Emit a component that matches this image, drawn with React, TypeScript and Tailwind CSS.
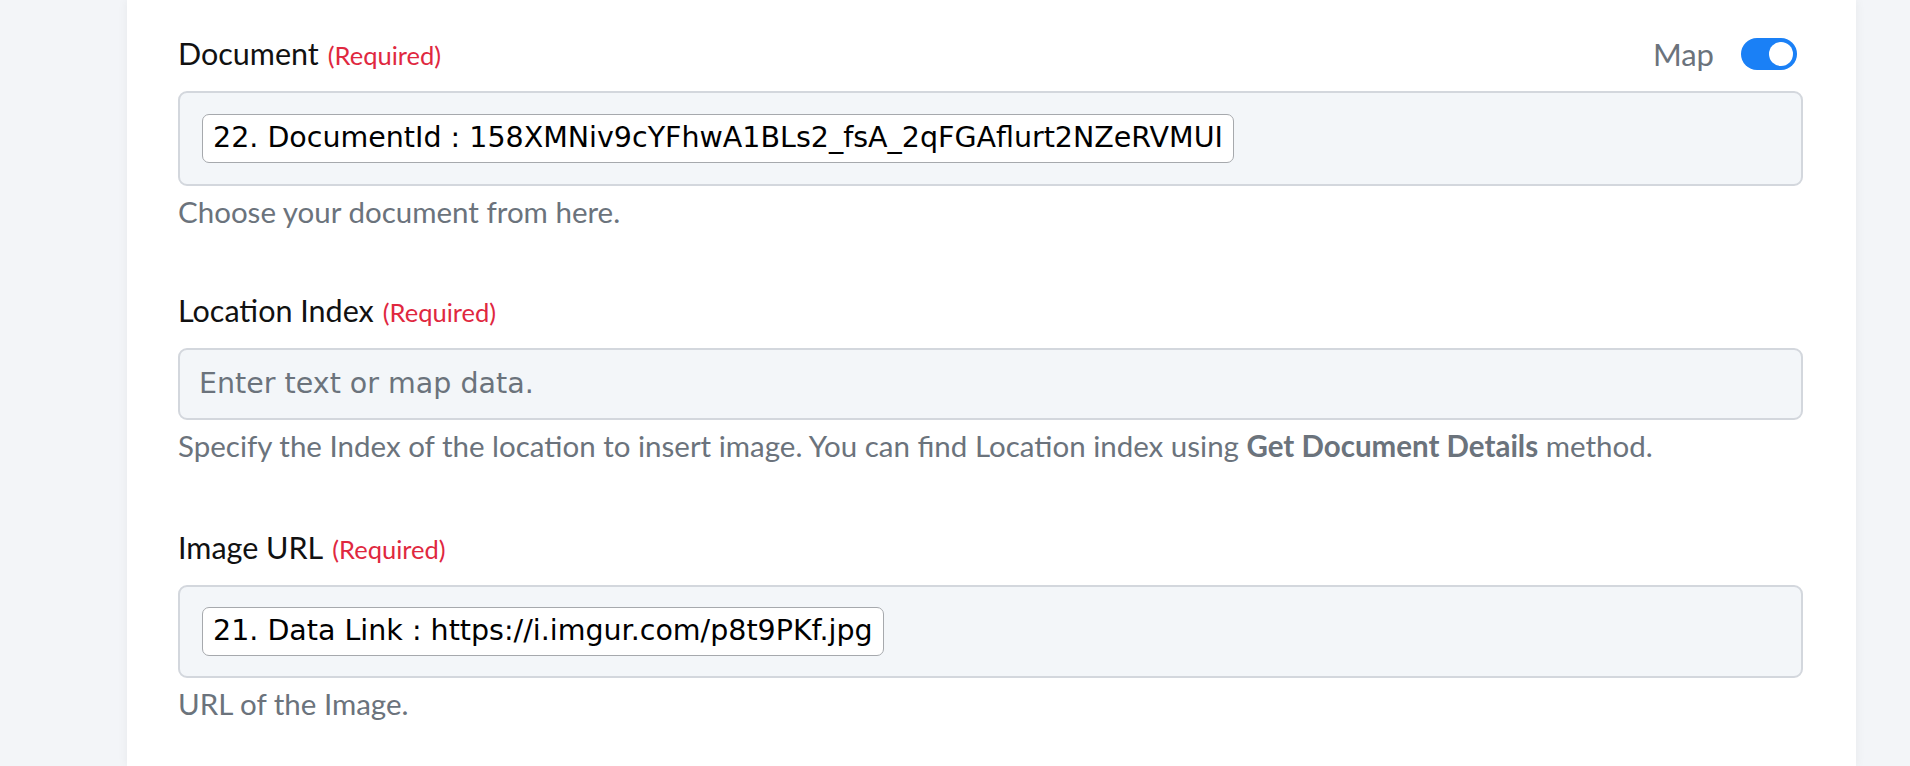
import React from 'react';

const labelFont = { fontFamily: 'Lato, "Noto Sans", sans-serif' };
const tagFont = { fontFamily: '"DejaVu Sans", Verdana, sans-serif' };

function Required() {
  return <span className="ml-[9px] text-[25.5px] text-[#e0283f]">(Required)</span>;
}

function Tag({ children }: { children: React.ReactNode }) {
  return (
    <span
      className="inline-flex h-[49px] items-center whitespace-nowrap rounded-[7px] border border-[#a6a9ad] bg-white px-[10px] text-[28.5px] text-black"
      style={tagFont}
    >
      {children}
    </span>
  );
}

function Field({
  label,
  right,
  boxClass,
  className = '',
  children,
  help,
}: {
  label: string;
  right?: React.ReactNode;
  boxClass: string;
  className?: string;
  children: React.ReactNode;
  help: React.ReactNode;
}) {
  return (
    <div className={className}>
      <div className="flex h-10 items-center justify-between">
        <div className="flex items-baseline text-[30.5px] text-[#111]">
          {label}
          <Required />
        </div>
        {right}
      </div>
      <div
        className={`mt-[17px] flex items-center rounded-[9px] border-2 border-[#d3d7dd] bg-[#f3f6f9] px-[22px] ${boxClass}`}
      >
        {children}
      </div>
      <p className="mt-[9px] whitespace-nowrap text-[29.5px] leading-[34px] text-[#6b737c]">{help}</p>
    </div>
  );
}

export default function App() {
  return (
    <div className="min-h-[766px] w-full overflow-hidden bg-[#f3f5f8]" style={labelFont}>
      <div className="ml-[127px] min-h-[766px] w-[1729px] bg-white pl-[51px] pr-[53px] pt-[34px] shadow-[0_0_10px_rgba(0,0,0,0.06)]">
        <div className="flex flex-col gap-[62px]">
          <Field
            label="Document"
            boxClass="h-[95px]"
            right={
              <div className="mr-[6px] flex items-center gap-[27px]">
                <span className="text-[31px] text-[#6b737c]">Map</span>
                <div className="flex h-[32px] w-[56px] items-center justify-end rounded-full bg-[#1a80f6] pr-[4px]">
                  <div className="h-[24px] w-[24px] rounded-full bg-white" />
                </div>
              </div>
            }
            help="Choose your document from here."
          >
            <Tag>22. DocumentId : 158XMNiv9cYFhwA1BLs2_fsA_2qFGAflurt2NZeRVMUI</Tag>
          </Field>

          <Field
            label="Location Index"
            boxClass="h-[72px] !px-[19px]"
            help={
              <>
                Specify the Index of the location to insert image. You can find Location index using{' '}
                <b className="font-bold">Get Document Details</b> method.
              </>
            }
          >
            <span className="text-[28.5px] text-[#6b737c]" style={tagFont}>
              Enter text or map data.
            </span>
          </Field>

          <Field className="mt-[3px]" label="Image URL" boxClass="h-[93px]" help="URL of the Image.">
            <Tag>21. Data Link : https://i.imgur.com/p8t9PKf.jpg</Tag>
          </Field>
        </div>
      </div>
    </div>
  );
}
